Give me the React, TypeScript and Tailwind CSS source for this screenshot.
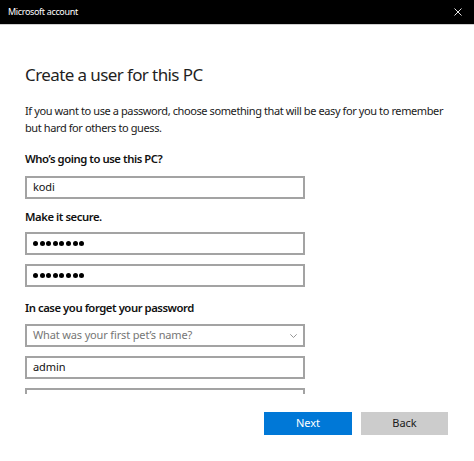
import React from "react";

const font = { fontFamily: '"Noto Sans", "Open Sans", sans-serif' };

function Dots() {
  return (
    <div className="flex gap-[1.6px]">
      {Array.from({ length: 8 }).map((_, i) => (
        <div key={i} className="w-[5px] h-[5px] rounded-full bg-black" />
      ))}
    </div>
  );
}

function Box({ children }: { children?: React.ReactNode }) {
  return (
    <div className="w-[280px] h-[23px] border-2 border-[#a3a3a3] bg-white flex items-center pl-[6px] pr-[6px] text-[11px] tracking-[-0.1px] text-[#111]">
      {children}
    </div>
  );
}

function Label({ children }: { children: React.ReactNode }) {
  return (
    <div className="text-[11.3px] font-semibold tracking-[-0.45px] text-[#111] leading-[16px]">{children}</div>
  );
}

export default function App() {
  return (
    <div className="w-[474px] h-[461px] bg-white flex flex-col overflow-hidden" style={font}>
      <div className="h-[24px] bg-black flex items-center justify-between pl-[8px] pr-[12px] shrink-0">
        <span className="text-white text-[9px] tracking-[-0.35px]">Microsoft account</span>
        <svg width="8" height="8" viewBox="0 0 8 8">
          <path d="M0.5 0.5L7.5 7.5M7.5 0.5L0.5 7.5" stroke="#e6e6e6" strokeWidth="1" />
        </svg>
      </div>
      <div className="h-px bg-[#cfcfcf] shrink-0" />
      <div className="h-[369px] overflow-hidden pl-[25px] shrink-0">
        <h1 className="mt-[38px] text-[17px] leading-[24px] tracking-[-0.6px] text-[#1f1f1f] font-normal">
          Create a user for this PC
        </h1>
        <p className="mt-[15px] text-[11px] leading-[17px] tracking-[-0.4px] text-[#1a1a1a] whitespace-nowrap">
          If you want to use a password, choose something that will be easy for you to remember
          <br />
          but hard for others to guess.
        </p>
        <div className="mt-[15px]">
          <Label>Who’s going to use this PC?</Label>
        </div>
        <div className="mt-[9px]">
          <Box>kodi</Box>
        </div>
        <div className="mt-[10px]">
          <Label>Make it secure.</Label>
        </div>
        <div className="mt-[7px] flex flex-col gap-[9px]">
          <Box>
            <Dots />
          </Box>
          <Box>
            <Dots />
          </Box>
        </div>
        <div className="mt-[13px]">
          <Label>In case you forget your password</Label>
        </div>
        <div className="mt-[8px] flex flex-col gap-[9px]">
          <div className="w-[280px] h-[23px] border-2 border-[#a3a3a3] bg-white flex items-center justify-between pl-[6px] pr-[6px] text-[11px] tracking-[-0.15px] text-[#767676]">
            <span>What was your first pet’s name?</span>
            <svg width="7" height="4" viewBox="0 0 7 4">
              <path d="M0.3 0.3L3.5 3.5L6.7 0.3" stroke="#8a8a8a" strokeWidth="0.9" fill="none" />
            </svg>
          </div>
          <Box>admin</Box>
          <Box />
        </div>
      </div>
      <div className="flex justify-end gap-[9px] pr-[26px] mt-[18px]">
        <button className="w-[88px] h-[23px] bg-[#0078d7] text-white text-[11px] flex items-center justify-center">
          Next
        </button>
        <button className="w-[87px] h-[23px] bg-[#cccccc] text-[#1a1a1a] text-[11px] flex items-center justify-center">
          Back
        </button>
      </div>
    </div>
  );
}
